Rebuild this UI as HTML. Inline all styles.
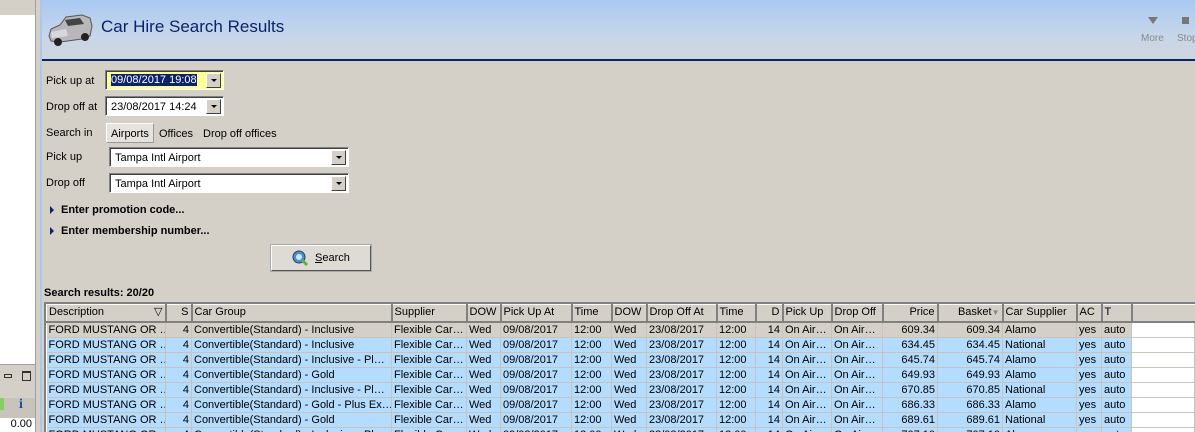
<!DOCTYPE html>
<html><head><meta charset="utf-8"><style>
*{margin:0;padding:0;box-sizing:border-box}
body{width:1195px;height:432px;overflow:hidden;background:#d4d0c8;font-family:"Liberation Sans",Tahoma,sans-serif;font-size:11px;color:#000;position:relative}
.abs{position:absolute}
.hdr{left:42px;top:0;width:1153px;height:61px;background:linear-gradient(#a9c9f3,#c6d6ea 60%,#d2d6dc);border-bottom:2px solid #0a2468}
.title{left:101px;top:17px;font-size:17px;color:#0a2468}
.lbl{left:46px;font-size:11px}
.inp{background:#fff;border:1px solid #808080;border-right-color:#fff;border-bottom-color:#fff;box-shadow:inset 1px 1px 0 #404040;height:20px}
.dd{position:absolute;right:2px;top:2px;width:15px;height:15px;background:#d4d0c8;border:1px solid #fff;border-right-color:#404040;border-bottom-color:#404040}
.dd:after{content:"";position:absolute;left:4px;top:5px;border-left:3px solid transparent;border-right:3px solid transparent;border-top:3px solid #000}
.txt{position:absolute;left:5px;top:4px}
table{border-collapse:collapse;table-layout:fixed}
td{height:15px;padding:0 2px;white-space:nowrap;overflow:hidden;border-right:1px solid #c8c4bc;border-bottom:1px solid #c8c4bc;line-height:14px}
th{height:17px;line-height:15px;font-weight:normal;text-align:left;padding:0 2px;background:#d4d0c8;border:1px solid #fff;border-right:2px solid #808080;border-bottom:2px solid #808080;white-space:nowrap;overflow:hidden}
.r{text-align:right}
tr.b td{background:#b4dcfe}
tr.g td{background:#d4d0c8}
td.e{background:#fff!important}
</style></head><body>
<div class="abs" style="left:0;top:0;width:35px;height:15px;background:#d4d0c8"></div>
<div class="abs" style="left:0;top:15px;width:35px;height:235px;background:#fff"></div>
<div class="abs" style="left:0;top:250px;width:35px;height:115px;background:#fff;border-bottom:1px solid #a0a0a0"></div>
<div class="abs" style="left:35px;top:0;width:1px;height:432px;background:#a0a0a0"></div>
<div class="abs" style="left:40px;top:0;width:2px;height:432px;background:#a8c8f0"></div>
<div class="abs" style="left:0;top:365px;width:35px;height:32px;background:#d4d0c8"></div>
<div class="abs" style="left:4px;top:374px;width:8px;height:4px;border:1px solid #333"></div>
<div class="abs" style="left:22px;top:371px;width:9px;height:10px;border:1px solid #333;border-top-width:2px"></div>
<div class="abs" style="left:0;top:398px;width:35px;height:20px;background:#c8c4bc"></div>
<div class="abs" style="left:19px;top:397px;color:#1a50a0;font-weight:bold;font-family:'Liberation Serif',serif;font-size:14px">i</div>
<div class="abs" style="left:0;top:398px;width:4px;height:12px;background:#8c6"></div>
<div class="abs" style="left:0;top:418px;width:35px;height:14px;background:#fff;text-align:right;padding-right:3px;font-size:11px">0.00</div>

<div class="abs hdr"></div>
<svg class="abs" style="left:46px;top:12px" width="50" height="36" viewBox="0 0 50 36"><path d="M3 24 L5 17 L14 13 L20 5 L36 3 L44 6 L46 14 L44 24 L36 27 L14 30 L5 29Z" fill="#b8b8bc" stroke="#555" stroke-width="1"/><path d="M19 8 L34 6 L38 12 L22 14Z" fill="#444"/><ellipse cx="12" cy="30" rx="4" ry="4" fill="#222"/><ellipse cx="39" cy="25" rx="4" ry="4" fill="#222"/><path d="M5 20 L20 17 L22 24 L6 26Z" fill="#d8d8dc"/></svg>
<div class="abs title">Car Hire Search Results</div>
<div class="abs" style="left:1148px;top:17px;border-left:5px solid transparent;border-right:5px solid transparent;border-top:7px solid #777"></div>
<div class="abs" style="left:1141px;top:33px;color:#888;font-size:10px">More</div>
<div class="abs" style="left:1182px;top:17px;width:7px;height:7px;background:#777"></div>
<div class="abs" style="left:1177px;top:33px;color:#888;font-size:10px">Stop</div>

<div class="abs lbl" style="top:75px">Pick up at</div>
<div class="abs inp" style="left:105px;top:70px;width:119px;background:#ffff99"><span class="txt" style="left:5px;top:3px;background:#0a246a;color:#fff">09/08/2017 19:08</span><div class="dd"></div></div>
<div class="abs lbl" style="top:101px">Drop off at</div>
<div class="abs inp" style="left:105px;top:96px;width:119px"><span class="txt">23/08/2017 14:24</span><div class="dd"></div></div>
<div class="abs lbl" style="top:127px">Search in</div>
<div class="abs" style="left:106px;top:123px;width:48px;height:20px;background:#e6e3de;border:1px solid #fff;border-right-color:#999;border-bottom-color:#999"></div>
<div class="abs" style="left:111px;top:128px">Airports</div>
<div class="abs" style="left:159px;top:128px">Offices</div>
<div class="abs" style="left:203px;top:128px">Drop off offices</div>
<div class="abs lbl" style="top:151px">Pick up</div>
<div class="abs inp" style="left:109px;top:147px;width:240px"><span class="txt">Tampa Intl Airport</span><div class="dd"></div></div>
<div class="abs lbl" style="top:177px">Drop off</div>
<div class="abs inp" style="left:109px;top:173px;width:240px"><span class="txt">Tampa Intl Airport</span><div class="dd"></div></div>
<div class="abs" style="left:50px;top:206px;border-top:4px solid transparent;border-bottom:4px solid transparent;border-left:4px solid #0a246a"></div>
<div class="abs" style="left:61px;top:204px;font-weight:bold">Enter promotion code...</div>
<div class="abs" style="left:50px;top:227px;border-top:4px solid transparent;border-bottom:4px solid transparent;border-left:4px solid #0a246a"></div>
<div class="abs" style="left:61px;top:225px;font-weight:bold">Enter membership number...</div>
<div class="abs" style="left:271px;top:245px;width:100px;height:26px;background:#dedbd5;border:1px solid #fff;border-right-color:#555;border-bottom-color:#555;box-shadow:0 0 0 1px #aaa"></div>
<svg class="abs" style="left:292px;top:250px" width="16" height="16"><circle cx="7" cy="7" r="6" fill="#4a90d8" stroke="#245"/><circle cx="7" cy="7" r="3" fill="#cfe8ff"/><path d="M10 10 L15 15" stroke="#6a4" stroke-width="3"/></svg>
<div class="abs" style="left:315px;top:252px"><u>S</u>earch</div>
<div class="abs" style="left:44px;top:287px;font-weight:bold">Search results: 20/20</div>

<div class="abs" style="left:44px;top:302px;width:1151px;height:130px;background:#fff;border-top:2px solid #808080;border-left:2px solid #808080;overflow:hidden">
<table style="width:1149px">
<colgroup><col style="width:119px"><col style="width:26px"><col style="width:200px"><col style="width:75px"><col style="width:34px"><col style="width:71px"><col style="width:40px"><col style="width:35px"><col style="width:70px"><col style="width:39px"><col style="width:27px"><col style="width:49px"><col style="width:51px"><col style="width:55px"><col style="width:65px"><col style="width:74px"><col style="width:25px"><col style="width:30px"><col></colgroup>
<tr><th>Description <span style="float:right">&#9661;</span></th><th class="r">S</th><th>Car Group</th><th>Supplier</th><th>DOW</th><th>Pick Up At</th><th>Time</th><th>DOW</th><th>Drop Off At</th><th>Time</th><th class="r">D</th><th>Pick Up</th><th>Drop Off</th><th class="r">Price</th><th class="r">Basket<span style="color:#888;font-size:8px">&#9660;</span></th><th>Car Supplier</th><th>AC</th><th>T</th><th style="border-right:none"></th></tr>
<tr class="g"><td>FORD MUSTANG OR …</td><td class="r">4</td><td>Convertible(Standard) - Inclusive</td><td>Flexible Car…</td><td>Wed</td><td>09/08/2017</td><td>12:00</td><td>Wed</td><td>23/08/2017</td><td>12:00</td><td class="r">14</td><td>On Air…</td><td>On Air…</td><td class="r">609.34</td><td class="r">609.34</td><td>Alamo</td><td>yes</td><td>auto</td><td class="e"></td></tr>
<tr class="b"><td>FORD MUSTANG OR …</td><td class="r">4</td><td>Convertible(Standard) - Inclusive</td><td>Flexible Car…</td><td>Wed</td><td>09/08/2017</td><td>12:00</td><td>Wed</td><td>23/08/2017</td><td>12:00</td><td class="r">14</td><td>On Air…</td><td>On Air…</td><td class="r">634.45</td><td class="r">634.45</td><td>National</td><td>yes</td><td>auto</td><td class="e"></td></tr>
<tr class="b"><td>FORD MUSTANG OR …</td><td class="r">4</td><td>Convertible(Standard) - Inclusive - Pl…</td><td>Flexible Car…</td><td>Wed</td><td>09/08/2017</td><td>12:00</td><td>Wed</td><td>23/08/2017</td><td>12:00</td><td class="r">14</td><td>On Air…</td><td>On Air…</td><td class="r">645.74</td><td class="r">645.74</td><td>Alamo</td><td>yes</td><td>auto</td><td class="e"></td></tr>
<tr class="b"><td>FORD MUSTANG OR …</td><td class="r">4</td><td>Convertible(Standard) - Gold</td><td>Flexible Car…</td><td>Wed</td><td>09/08/2017</td><td>12:00</td><td>Wed</td><td>23/08/2017</td><td>12:00</td><td class="r">14</td><td>On Air…</td><td>On Air…</td><td class="r">649.93</td><td class="r">649.93</td><td>Alamo</td><td>yes</td><td>auto</td><td class="e"></td></tr>
<tr class="b"><td>FORD MUSTANG OR …</td><td class="r">4</td><td>Convertible(Standard) - Inclusive - Pl…</td><td>Flexible Car…</td><td>Wed</td><td>09/08/2017</td><td>12:00</td><td>Wed</td><td>23/08/2017</td><td>12:00</td><td class="r">14</td><td>On Air…</td><td>On Air…</td><td class="r">670.85</td><td class="r">670.85</td><td>National</td><td>yes</td><td>auto</td><td class="e"></td></tr>
<tr class="b"><td>FORD MUSTANG OR …</td><td class="r">4</td><td>Convertible(Standard) - Gold - Plus Ex…</td><td>Flexible Car…</td><td>Wed</td><td>09/08/2017</td><td>12:00</td><td>Wed</td><td>23/08/2017</td><td>12:00</td><td class="r">14</td><td>On Air…</td><td>On Air…</td><td class="r">686.33</td><td class="r">686.33</td><td>Alamo</td><td>yes</td><td>auto</td><td class="e"></td></tr>
<tr class="b"><td>FORD MUSTANG OR …</td><td class="r">4</td><td>Convertible(Standard) - Gold</td><td>Flexible Car…</td><td>Wed</td><td>09/08/2017</td><td>12:00</td><td>Wed</td><td>23/08/2017</td><td>12:00</td><td class="r">14</td><td>On Air…</td><td>On Air…</td><td class="r">689.61</td><td class="r">689.61</td><td>National</td><td>yes</td><td>auto</td><td class="e"></td></tr>
<tr class="b"><td>FORD MUSTANG OR …</td><td class="r">4</td><td>Convertible(Standard) - Inclusive - Pl…</td><td>Flexible Car…</td><td>Wed</td><td>09/08/2017</td><td>12:00</td><td>Wed</td><td>23/08/2017</td><td>12:00</td><td class="r">14</td><td>On Air…</td><td>On Air…</td><td class="r">707.10</td><td class="r">707.10</td><td>Alamo</td><td>yes</td><td>auto</td><td class="e"></td></tr>
</table></div>
</body></html>
